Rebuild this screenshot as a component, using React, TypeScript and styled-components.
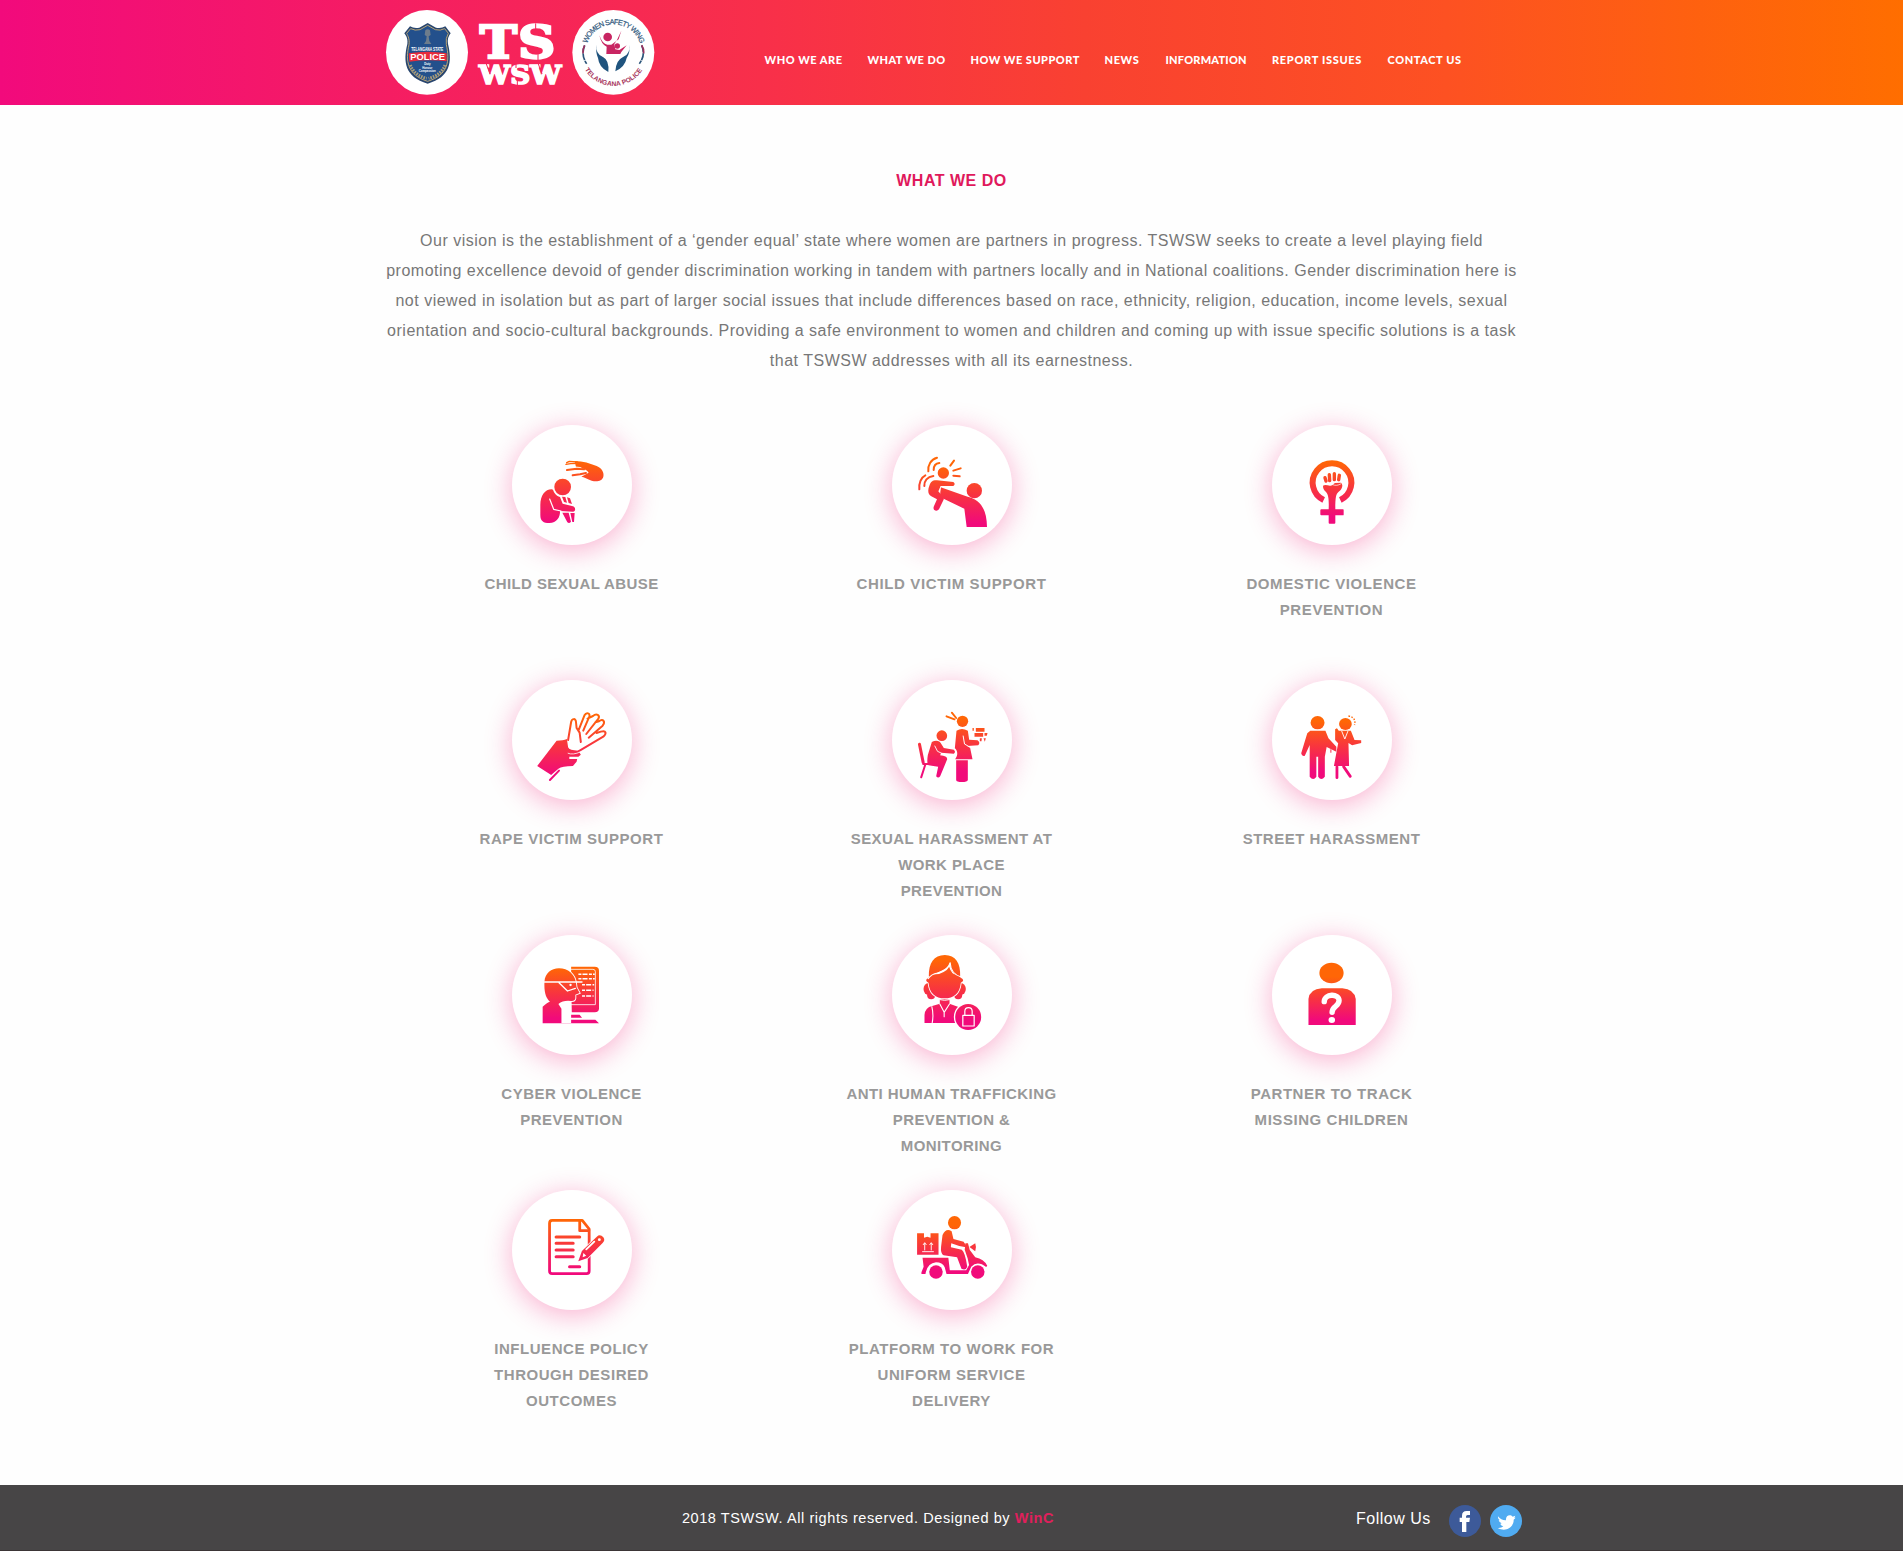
import React from 'react';
import styled, { createGlobalStyle } from 'styled-components';

const GlobalStyle = createGlobalStyle`
  * { box-sizing: border-box; }
  body {
    margin: 0;
    background: #fefefe;
    font-family: "Liberation Sans", Arial, sans-serif;
  }
`;

const Page = styled.div`
  min-height: 1551px;
  display: flex;
  flex-direction: column;
`;

const Header = styled.header`
  height: 105px;
  background: linear-gradient(90deg, #f20a7c 0%, #f82f4a 40%, #f94131 57%, #fd5122 76%, #ff6e00 100%);
`;

const Container = styled.div`
  width: 1140px;
  margin: 0 auto;
`;

const HeaderInner = styled(Container)`
  height: 105px;
  display: flex;
  align-items: flex-start;
`;

const Logo = styled.svg`
  display: block;
  width: 300px;
  height: 105px;
  margin-left: -11.5px;
  flex: none;
`;

const Nav = styled.nav`
  display: flex;
  gap: 25px;
  margin: 50px 0 0 94.5px;
`;

const NavLink = styled.a<{ $width: number; $track: number }>`
  width: ${(p) => p.$width}px;
  color: #fff;
  font: 900 11px/20px Lato, sans-serif;
  letter-spacing: ${(p) => p.$track}px;
  white-space: nowrap;
  text-decoration: none;
`;

const Main = styled.main`
  flex: 1;
  padding-top: 66px;
`;

const Title = styled.h1`
  margin: 0;
  color: #e0195c;
  font-size: 16px;
  line-height: 20px;
  letter-spacing: 0.5px;
  text-align: center;
`;

const Intro = styled.p`
  margin: 35px 0 0;
  color: #777;
  font-size: 16px;
  line-height: 30px;
  letter-spacing: 0.5px;
  text-align: center;
`;

const Services = styled.section`
  margin-top: 49px;
  display: grid;
  grid-template-columns: repeat(3, 380px);
  grid-auto-rows: 255px;
`;

const Service = styled.article`
  display: flex;
  flex-direction: column;
  align-items: center;
`;

const Disc = styled.div`
  width: 120px;
  height: 120px;
  border-radius: 50%;
  background: #fff;
  box-shadow: 0 5px 28px rgba(242, 10, 110, 0.32);
`;

const Label = styled.h2<{ $track?: number }>`
  width: 211px;
  margin: 26px 0 0;
  color: #999;
  font-size: 15px;
  font-weight: 700;
  line-height: 26px;
  letter-spacing: ${(p) => p.$track ?? 0.55}px;
  text-align: center;
`;

const Footer = styled.footer`
  height: 66px;
  background: #474546;
  border-bottom: 1px solid #3b3536;
  color: #fff;
`;

const FooterInner = styled(Container)`
  height: 66px;
  display: flex;
  align-items: center;
`;

const Copyright = styled.div`
  width: 973px;
  flex: none;
  text-align: center;
  font-size: 14.5px;
  letter-spacing: 0.58px;
`;

const Brand = styled.b`
  color: #e01f5c;
`;

const Follow = styled.div`
  flex: none;
  display: flex;
  align-items: center;
  padding: 5px 0 0 1.5px;
  font-size: 16px;
  letter-spacing: 0.5px;
  white-space: nowrap;
`;

const FollowText = styled.span`
  width: 93px;
  padding-bottom: 3px;
`;

const Social = styled.svg`
  width: 32px;
  height: 32px;
  margin-right: 9px;
`;

const nav = [
  { text: 'WHO WE ARE', width: 78, track: 0.5 },
  { text: 'WHAT WE DO', width: 78, track: 0.42 },
  { text: 'HOW WE SUPPORT', width: 109, track: 0.48 },
  { text: 'NEWS', width: 36, track: 0.65 },
  { text: 'INFORMATION', width: 81.5, track: 0.22 },
  { text: 'REPORT ISSUES', width: 90.5, track: 0.68 },
  { text: 'CONTACT US', width: 75, track: 0.58 },
];

type Art = {
  id: string;
  label: string;
  track?: number;
  place: string;
  top: number;
  bottom: number;
  draw: (paint: string) => React.ReactNode;
};

const line = (d: string, stroke: string, width: number) => (
  <path d={d} fill="none" stroke={stroke} strokeWidth={width} strokeLinecap="round" strokeLinejoin="round" vectorEffect="non-scaling-stroke" />
);

const FIRST = 'translate(-96 -75)';
const wide = (x: number) => `scale(1.8176 1) translate(${-x - 1.4} -60)`;
const tall = (x: number) => `scale(1.0905 1) translate(${-x - 1} -60)`;

const services: Art[] = [
  {
    id: 'abuse', label: 'CHILD SEXUAL ABUSE', track: 0.42, place: FIRST, top: 185, bottom: 365,
    draw: (p) => (
      <>
        <circle cx="248" cy="261" r="25" />
        <path d="M181 315C181 286 195 268 215 268 219 268 220 272 222 277 228 287 235 290 240 291L248 311 279 319C288 322 287 334 279 335L240 333C241 350 232 369 208 369 190 369 181 364 181 345Z" />
        {line('M209 297 221 328 243 333', '#fff', 1.2)}
        <path d="M246 290 256 291 261 308 252 306ZM261 292 270 295 276 312 266 309ZM247 338H266L273 365Q268 372 262 367ZM271 339H284L282 366 277 366Z" />
        <path d="M284 183C310 184 330 190 350 198 366 205 373 218 370 230 366 244 350 246 335 242 322 238 312 230 304 230L326 218C318 207 305 204 288 202Z" />
        {line('M260 188 268 184 292 186M258 193 272 191 300 190', p, 1.4)}
        {line('M261 210 290 206 312 208M278 226 300 223 318 219', p, 2)}
        {line('M273 199 303 203', '#fff', 0.8)}
      </>
    ),
  },
  {
    id: 'victim', label: 'CHILD VICTIM SUPPORT', track: 0.62, place: FIRST, top: 195, bottom: 370,
    draw: (p) => (
      <>
        <circle cx="250" cy="219" r="17" />
        <circle cx="343" cy="272" r="23" />
        <path d="M242 262 323 290C358 299 380 322 381 381H320L313 326 240 291Z" />
        <path d="M231 241 280 246Q288 252 280 258L243 258 235 274 247 288Q254 294 250 301L237 328Q230 336 222 329 219 325 222 318L231 298 214 289C203 282 203 270 208 257 213 243 220 240 231 241Z" />
        {line('M242 260 239 272', '#fff', 0.8)}
        {line('M205 214C203 195 213 178 231 173M221 210C221 198 228 190 238 189M178 268C176 250 183 232 196 226M193 258C192 243 202 230 220 228', p, 2)}
        {line('M271 197 282 182M280 212 302 205M280 227 299 229', p, 2)}
      </>
    ),
  },
  {
    id: 'domestic', label: 'DOMESTIC VIOLENCE PREVENTION', track: 0.6, place: FIRST, top: 185, bottom: 350,
    draw: (p) => (
      <>
        <path d="M251 300A58 58 0 1 1 301 300" fill="none" stroke={p} strokeWidth="18" />
        {line('M255 233 258 243M268 224 269 242M283 221 283 239M298 226 296 239', p, 3.4)}
        <path d="M249 257C255 253 262 256 270 257 280 258 278 251 286 249L303 248C311 256 306 268 296 275 288 282 286 290 286 328H309Q311 328 311 330V344Q311 346 309 346H286V368Q286 371 283 371H269Q266 371 266 368V346H244Q241 346 241 343V331Q241 328 244 328H266C267 300 266 285 258 276 251 270 249 264 249 257Z" />
        {line('M278 254C286 258 295 256 302 252', '#fff', 0.7)}
      </>
    ),
  },
  {
    id: 'rape', label: 'RAPE VICTIM SUPPORT', place: wide(52), top: 165, bottom: 345,
    draw: (p) => (
      <>
        <path d="M127 242Q138 242 144 237L146 262Q148 272 163 272L167 284 163 290H148V297H161L160 305 154 318Q136 318 130 326L118 345Q112 338 95 318Z" />
        {line('M146 240 151 186C152 175 159 174 159 186L160 204 165 218 167 246M163 212 173 166C176 156 183 159 181 170L171 212M178 176 187 168C193 158 199 166 196 176L176 222M191 187 197 184C204 174 208 186 203 197L180 233M193 219 200 215C209 210 210 220 204 230L163 274', p, 2)}
        {line('M131 332 116 360', p, 2)}
        {line('M146 280Q154 286 166 276', '#fff', 0.8)}
      </>
    ),
  },
  {
    id: 'work', label: 'SEXUAL HARASSMENT AT WORK PLACE PREVENTION', track: 0.42, place: 'translate(25.5 60)', top: 55, bottom: 215,
    draw: (p) => (
      <>
        <circle cx="124" cy="107" r="16" />
        <circle cx="186" cy="64" r="17" />
        {line('M138 49 162 58M154 38 167 54', p, 1.9)}
        <path d="M168 92Q184 82 202 92L206 119 231 121Q241 128 233 136L200 138 209 144 216 178H164C174 165 171 151 163 145Z" />
        {line('M188 108 192 132 204 139', '#fff', 1)}
        <path d="M167 181H202V240Q200 246 185 246 167 246 167 240Z" />
        <path d="M94 126C106 119 118 122 122 131L130 144 160 149Q167 156 160 161L122 158 119 166Q141 168 140 178L119 229Q113 236 107 229L113 200 84 196Q78 190 82 165Z" />
        {line('M103 138 111 154 122 159', '#fff', 0.9)}
        {line('M57 133 68 187', p, 3)}
        {line('M68 192H99M74 195 62 232', p, 2)}
        <path d="M216 84H220V92H216ZM226 84H252V95H226ZM222 99H248V110H222ZM252 99H261L259 107H252ZM238 115H244L243 124H238ZM249 115H256L253 125Z" />
      </>
    ),
  },
  {
    id: 'street', label: 'STREET HARASSMENT', track: 0.5, place: wide(1306.4), top: 185, bottom: 335,
    draw: (p) => (
      <>
        <ellipse cx="1383" cy="188" rx="11.5" ry="20" />
        <ellipse cx="1429" cy="192" rx="10.5" ry="18" />
        <path d="M1371 212H1396L1401 235 1414 260 1414 275 1398 261 1395 290V350Q1389 364 1384 350V290H1381V350Q1376 364 1370 350V255L1362 287Q1357 290 1356 280L1366 220Z" />
        <path d="M1418 212H1438L1444 240 1455 241V249L1440 256 1434 249 1435 318H1410L1417 250 1412 240V208L1415 205Z" />
        {line('M1415 320V353M1426 320 1437 349', p, 2.8)}
        {line('M1423 214 1428 237 1433 214', '#fff', 0.9)}
        {line('M1405 269V277', p, 1)}
        <path d="M1434 168Q1447 172 1444 195" fill="none" stroke={p} strokeWidth="1.4" strokeDasharray="1.5 1.5" vectorEffect="non-scaling-stroke" />
      </>
    ),
  },
  {
    id: 'cyber', label: 'CYBER VIOLENCE PREVENTION', track: 0.5, place: wide(52), top: 160, bottom: 310,
    draw: () => (
      <>
        <path d="M151 155H190Q197 155 197 167V280Q197 292 190 292H151Z" />
        {line('M151 163H187Q191 163 191 170V269H151', '#fff', 0.8)}
        <path d="M163 178H190M163 191H190M169 209H189M169 226H188M169 243H188" fill="none" stroke="#fff" strokeWidth="1.5" strokeDasharray="3 1.1 5 1.4" vectorEffect="non-scaling-stroke" />
        <path d="M107 200C108 175 118 160 131 160 146 160 157 178 159 203L160 217 165 234 158 239V250Q157 260 150 258L151 325H104V275Q112 262 116 260C110 250 106 235 107 200Z" stroke="#fff" strokeWidth="1.8" paintOrder="stroke" vectorEffect="non-scaling-stroke" />
        <path d="M130 267Q138 255 151 258V325H135V281Z" fill="#fff" />
        {line('M107 201H169M131 203 145 228 158 220', '#fff', 1.3)}
        <ellipse cx="150" cy="210" rx="2" ry="3.5" fill="#fff" />
        <path d="M151 299H165L169 308H151ZM151 314H191L197 325H151Z" />
      </>
    ),
  },
  {
    id: 'traffic', label: 'ANTI HUMAN TRAFFICKING PREVENTION & MONITORING', track: 0.42, place: 'translate(25.5 -705)', top: 780, bottom: 960,
    draw: () => (
      <>
        <ellipse cx="84" cy="867" rx="15" ry="18" />
        <ellipse cx="181" cy="867" rx="15" ry="18" />
        <circle cx="92" cy="886" r="12" />
        <circle cx="173" cy="886" r="12" />
        <path d="M84 833Q70 840 84 848C87 880 105 895 132 895 160 895 178 880 181 848Q195 840 181 833L173 823H90Z" stroke="#fff" strokeWidth="5" paintOrder="stroke" />
        <path d="M85 829C84 790 100 765 133 765 165 765 181 790 179 829L170 827C155 820 150 805 149 788 140 812 105 816 88 830Z" />
        <path d="M146 800Q152 822 172 829H92Q138 818 146 800Z" />
        {line('M83 836Q93 822 111 819C135 813 146 799 149 788 150 810 162 825 182 831', '#fff', 1.1)}
        <path d="M72 969V945Q74 922 95 918L118 911V898H147V911L172 920Q190 925 190 969Z" />
        {line('M118 912 131 937 147 912M131 937V950M94 920Q100 945 95 969', '#fff', 1.1)}
        {line('M118 899Q132 903 147 899', '#fff', 1)}
        <circle cx="203" cy="951" r="39" stroke="#fff" strokeWidth="8" paintOrder="stroke" />
        {line('M187 946H221V978H187ZM193 945V934Q193 923 204 923 215 923 215 934V945', '#fff', 1.2)}
      </>
    ),
  },
  {
    id: 'missing', label: 'PARTNER TO TRACK MISSING CHILDREN', place: wide(1306.4), top: 185, bottom: 315,
    draw: () => (
      <>
        <ellipse cx="1406" cy="174" rx="20" ry="31" />
        <path d="M1368 330V252Q1370 222 1390 220H1424Q1443 222 1446 252V330Z" />
        {line('M1394 260C1394 236 1418.500 234 1418.500 257 1418 276 1407 272 1407 292', '#fff', 5.4)}
        <ellipse cx="1406.500" cy="315" rx="5.400" ry="9" fill="#fff" />
      </>
    ),
  },
  {
    id: 'policy', label: 'INFLUENCE POLICY THROUGH DESIRED OUTCOMES', track: 0.55, place: tall(86.7), top: 150, bottom: 305,
    draw: (p) => (
      <>
        {line('M281 151H198Q191 151 191 160V303Q191 311 198 311H293Q300 311 300 303V177Z', p, 2.8)}
        {line('M274 152V182H299', p, 2.8)}
        {line('M209 201H274M209 220H256M209 240H256M209 260H256M246 290H274', p, 3)}
        <path d="M270 274 280 243 321 200Q330 191 339 202 345 211 337 219L296 264Z" stroke="#fff" strokeWidth="4" strokeLinejoin="round" paintOrder="stroke" />
        {line('M292 238 314 215', '#fff', 1.9)}
        <circle cx="328" cy="209" r="4" fill="#fff" />
        <path d="M284 249 292 257 282 262Z" fill="#fff" />
      </>
    ),
  },
  {
    id: 'delivery', label: 'PLATFORM TO WORK FOR UNIFORM SERVICE DELIVERY', place: tall(1132), top: 165, bottom: 300,
    draw: () => (
      <>
        <ellipse cx="1305" cy="158" rx="18" ry="20" />
        <path d="M1202 190H1221V203L1230 200 1239 203V190H1261V254H1202Z" />
        {line('M1223 240V220M1219 224 1223 218 1227 224M1241 240V220M1237 224 1241 218 1245 224M1217 245H1247', '#fff', 0.9)}
        <path d="M1272 195Q1282 172 1297 184L1302 207 1330 215 1340 232 1333 231 1318 228 1296 220 1295 232 1325 239Q1334 246 1340 290 1336 303 1324 296L1312 262 1275 256Q1266 250 1268 230Z" />
        <path d="M1346 231 1362 220Q1366 232 1362 244Z" />
        <path d="M1335 220H1342L1347 240 1362 262Q1386 268 1395 287L1392 291Q1368 271 1351 290L1342 312H1283L1278 292Q1272 277 1254 277 1230 280 1225 312H1214V307L1220 290 1217 263H1288L1292 301H1337L1345 285 1341 265 1333 239Z" />
        <ellipse cx="1254" cy="306" rx="18.500" ry="20" />
        <ellipse cx="1369" cy="306" rx="18.500" ry="20" />
      </>
    ),
  },
];

function ServiceIcon({ art }: { art: Art }) {
  const paint = `url(#tint-${art.id})`;
  return (
    <svg width="120" height="120" viewBox="0 0 360 360" aria-hidden="true">
      <defs>
        <linearGradient id={`tint-${art.id}`} gradientUnits="userSpaceOnUse" x1="0" x2="0" y1={art.top} y2={art.bottom}>
          <stop offset="0" stopColor="#ff6606" />
          <stop offset="0.5" stopColor="#f8343f" />
          <stop offset="1" stopColor="#f10a7b" />
        </linearGradient>
      </defs>
      <g transform={art.place} fill={paint}>{art.draw(paint)}</g>
    </svg>
  );
}

function HeaderLogo() {
  const slab = { fontFamily: '"DejaVu Serif", serif', fontWeight: 700 };
  const sans = { fontFamily: '"Liberation Sans", sans-serif' };
  return (
    <Logo viewBox="0 0 900 315">
      <defs>
        <path id="seal-top" d="M647 157A84 84 0 0 1 815 157" />
        <path id="seal-bottom" d="M630 157A101 101 0 0 0 832 157" />
      </defs>
      <ellipse cx="171" cy="157" rx="123" ry="127" fill="#fff" />
      <path d="M120 79Q133 87 148 83L173 69 198 83Q213 87 226 79L242 100Q231 112 234 132C247 185 242 231 173 251 104 231 99 185 112 132 115 112 104 102 103 100Z" fill="#29466f" />
      <path d="M122 86Q135 93 150 89L173 76 196 89Q211 93 224 86L235 100Q226 114 229 134C240 182 235 225 173 244 111 225 106 182 117 134 120 114 110 102 110 100Z" fill="#23508c" stroke="#d5b777" strokeWidth="2.500" />
      <path d="M166 91Q173 84 180 91L182 105 176 109 178 123 184 132H162L168 123 170 109 164 105Z" fill="#6d7c8c" />
      <path d="M121 195Q132 225 170 235M225 195Q214 225 176 235" fill="none" stroke="#a99c79" strokeWidth="9" strokeDasharray="5 3" />
      <text x="124" y="153" textLength="96" lengthAdjust="spacingAndGlyphs" fontSize="14" fontWeight="700" fill="#fff" style={sans}>TELANGANA STATE</text>
      <path d="M116 160Q173 150 230 160V184Q173 177 118 185Z" fill="#e72c3c" />
      <text x="121" y="181" textLength="104" lengthAdjust="spacingAndGlyphs" fontSize="25" fontWeight="700" fill="#fff" style={sans}>POLICE</text>
      <g fontSize="8.500" fontWeight="700" fill="#fff" textAnchor="middle" style={sans}>
        <text x="172" y="196">Duty</text>
        <text x="172" y="206">Honour</text>
        <text x="172" y="216">Compassion</text>
      </g>
      <g fill="#fff" stroke="#fff" style={slab}>
        <text x="329" y="175" fontSize="135" strokeWidth="7" textLength="112" lengthAdjust="spacingAndGlyphs">T</text>
        <text x="444" y="175" fontSize="135" strokeWidth="7" textLength="112" lengthAdjust="spacingAndGlyphs">S</text>
        <text x="327" y="251" fontSize="76" strokeWidth="5" textLength="247" lengthAdjust="spacingAndGlyphs">WSW</text>
      </g>
      <path d="M497 70V90M504 160V180M349 192 360 222M438 190V204M442 240V256M505 192 516 222" fill="none" stroke="#f42458" strokeWidth="3" />
      <ellipse cx="730" cy="157" rx="123" ry="127" fill="#fff" />
      <text fontSize="22" fill="#31597d" stroke="#31597d" strokeWidth="0.600" style={sans}><textPath href="#seal-top" startOffset="27" textLength="210">WOMEN SAFETY WING</textPath></text>
      <text fontSize="20" fontWeight="700" fill="#a63359" style={sans}><textPath href="#seal-bottom" startOffset="54" textLength="207">TELANGANA POLICE</textPath></text>
      <circle cx="713" cy="111" r="13" fill="#c82562" />
      <circle cx="742" cy="138" r="8" fill="#c82562" />
      <path d="M688 106Q697 132 712 134H724L746 118 754 92 741 120 733 132 736 148 748 150 770 136 754 156 751 162H709L710 140Q694 134 688 106Z" fill="#c82562" />
      <path d="M680 134Q675 161 700 172 718 181 715 216 687 203 684 174 676 155 680 134ZM777 134Q783 161 758 172 738 181 736 214 765 201 770 174 782 155 777 134Z" fill="#20547e" />
      <path d="M644 136Q632 165 650 191M815 136Q828 165 808 191" fill="none" stroke="#2c557a" strokeWidth="5" strokeDasharray="22 2" />
      <path d="M644 136Q637 148 639 160M815 136Q823 148 821 160" fill="none" stroke="#9d315d" strokeWidth="5" />
    </Logo>
  );
}

export default function App() {
  return (
    <Page>
      <GlobalStyle />
      <Header>
        <HeaderInner>
          <HeaderLogo />
          <Nav>
            {nav.map((n) => (
              <NavLink key={n.text} $width={n.width} $track={n.track}>{n.text}</NavLink>
            ))}
          </Nav>
        </HeaderInner>
      </Header>
      <Main>
        <Container>
          <Title>WHAT WE DO</Title>
          <Intro>
            Our vision is the establishment of a ‘gender equal’ state where women are partners in progress. TSWSW seeks to create a level playing field promoting excellence devoid of gender discrimination working in tandem with partners locally and in National coalitions. Gender discrimination here is not viewed in isolation but as part of larger social issues that include differences based on race, ethnicity, religion, education, income levels, sexual orientation and socio-cultural backgrounds. Providing a safe environment to women and children and coming up with issue specific solutions is a task that TSWSW addresses with all its earnestness.
          </Intro>
          <Services>
            {services.map((s) => (
              <Service key={s.id}>
                <Disc><ServiceIcon art={s} /></Disc>
                <Label $track={s.track}>{s.label}</Label>
              </Service>
            ))}
          </Services>
        </Container>
      </Main>
      <Footer>
        <FooterInner>
          <Copyright>2018 TSWSW. All rights reserved. Designed by <Brand>WinC</Brand></Copyright>
          <Follow>
            <FollowText>Follow Us</FollowText>
            <Social viewBox="0 0 96 96">
              <circle cx="48" cy="48" r="48" fill="#3d5a99" />
              <path d="M39 81V51H32V38H39V32Q39 18 53 18H63V30H56Q51 30 51 35V38H63L61 51H52V81Z" fill="#fff" />
            </Social>
            <Social viewBox="0 0 96 96">
              <circle cx="48" cy="48" r="48" fill="#50abf1" />
              <path d="M24 34Q34 47 48 46C46 32 60 26 68 35L76 32 73 38 77 38 71 44C72 66 48 83 23 69Q34 70 40 64 32 62 31 56L35 55Q27 52 26 45L30 46Q23 42 24 34Z" fill="#fff" />
            </Social>
          </Follow>
        </FooterInner>
      </Footer>
    </Page>
  );
}
